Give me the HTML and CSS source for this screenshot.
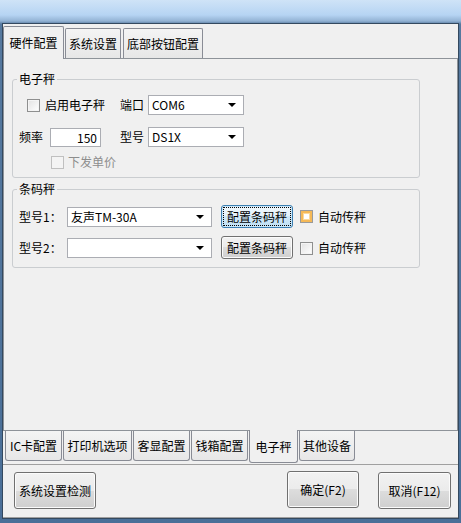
FILE: index.html
```html
<!DOCTYPE html>
<html lang="zh-CN">
<head>
  <meta charset="UTF-8">
  <title>系统设置</title>
  <link rel="stylesheet" href="styles.css">
</head>
<body>
  <div class="window">
    <div class="tabs tabs-top">
      <div class="tab active" style="width:61px">硬件配置</div>
      <div class="tab" style="width:56px">系统设置</div>
      <div class="tab" style="width:80px">底部按钮配置</div>
    </div>

    <div class="page">
      <fieldset class="group">
        <legend>电子秤</legend>
        <div class="row row-1">
          <span class="check ml-14"></span>
          <span class="lbl ml-5">启用电子秤</span>
          <span class="lbl ml-15">端口</span>
          <div class="combo ml-4 w-96"><span>COM6</span><i class="arrow"></i></div>
        </div>
        <div class="row row-2">
          <span class="lbl ml-6">频率</span>
          <div class="input ml-7">150</div>
          <span class="lbl ml-19">型号</span>
          <div class="combo ml-4 w-96"><span>DS1X</span><i class="arrow"></i></div>
        </div>
        <div class="row row-3">
          <span class="check disabled ml-38"></span>
          <span class="lbl gray ml-4">下发单价</span>
        </div>
      </fieldset>

      <fieldset class="group group-2">
        <legend>条码秤</legend>
        <div class="row row-b1">
          <span class="lbl lbl-model ml-6">型号1：</span>
          <div class="combo w-145"><span>友声TM-30A</span><i class="arrow"></i></div>
          <button class="btn btn-focus ml-9">配置条码秤</button>
          <span class="check hot ml-7"></span>
          <span class="lbl ml-5">自动传秤</span>
        </div>
        <div class="row row-b2">
          <span class="lbl lbl-model ml-6">型号2：</span>
          <div class="combo w-145"><span></span><i class="arrow"></i></div>
          <button class="btn ml-9">配置条码秤</button>
          <span class="check ml-7 mt-1"></span>
          <span class="lbl ml-5">自动传秤</span>
        </div>
      </fieldset>
    </div>

    <div class="tabs tabs-bottom">
      <div class="tab" style="width:57px">IC卡配置</div>
      <div class="tab" style="width:69px">打印机选项</div>
      <div class="tab" style="width:57px">客显配置</div>
      <div class="tab" style="width:57px">钱箱配置</div>
      <div class="tab active" style="width:49px">电子秤</div>
      <div class="tab" style="width:56px">其他设备</div>
    </div>

    <div class="footer">
      <button class="btn btn-big btn-check">系统设置检测</button>
      <button class="btn btn-big btn-ok">确定(F2)</button>
      <button class="btn btn-big btn-cancel">取消(F12)</button>
    </div>
  </div>
</body>
</html>
```

FILE: styles.css
```css
* { box-sizing: border-box; }
body {
  margin: 0;
  height: 523px;
  overflow: hidden;
  font-family: "Noto Sans CJK SC", "Liberation Sans", sans-serif;
  font-size: 12px;
  line-height: 14px;
  color: #000;
  background: linear-gradient(180deg, #cfe3f7 0, #b6d4f3 15px, #93b3d4 21px, #56799f 24px, #4a6f98 100%);
}
.window {
  margin: 23px 2px 0 2px;
  width: 457px;
  height: 496px;
  background: #f0f0f0;
  border: 1px solid #34495f;
  display: flex;
  flex-direction: column;
}

/* tabs */
.tabs { display: flex; flex: none; }
.tab {
  flex: none;
  text-align: center;
  white-space: nowrap;
  border: 1px solid #898c95;
  background: linear-gradient(180deg, #f4f4f4, #e7e7e7);
}
.tab.active { background: #f0f0f0; position: relative; z-index: 1; }
.tabs-top { height: 34px; align-items: flex-end; }
.tabs-top .tab {
  height: 30px;
  line-height: 29px;
  border-bottom: none;
  border-radius: 2px 2px 0 0;
  margin-right: 2px;
}
.tabs-top .tab:first-child { margin-right: 1px; }
.tabs-top .tab.active { height: 33px; line-height: 31px; margin-bottom: -1px; }
.tabs-bottom { height: 33px; align-items: flex-start; padding-left: 2px; }
.tabs-bottom .tab {
  height: 30px;
  line-height: 29px;
  border-top: none;
  border-radius: 0 0 3px 3px;
  margin-right: 1px;
}
.tabs-bottom .tab.active { height: 33px; line-height: 33px; margin-top: -1px; }

.page {
  height: 373px;
  flex: none;
  border: 1px solid #8e9399;
  padding: 13px 0 0 8px;
}

/* group boxes */
.group {
  width: 408px;
  margin: 0;
  padding: 0 0 8px 0;
  border: 1px solid #cacdd0;
  border-radius: 3px;
  min-width: 0;
}
.group legend {
  margin-left: 4px;
  padding: 0 2px;
  line-height: 14px;
}
.group-2 { margin-top: 4px; }
.row { display: flex; align-items: center; }
.row-1 { margin-top: 9px; height: 20px; }
.row-2 { margin-top: 12px; height: 20px; }
.row-3 { margin-top: 8px; height: 14px; }
.row-b1 { margin-top: 9px; height: 23px; }
.row-b2 { margin-top: 8px; height: 23px; }

.lbl { flex: none; white-space: nowrap; }
.lbl-model { width: 48px; }
.gray { color: #8d8d8d; }

.check {
  flex: none;
  width: 13px;
  height: 13px;
  border: 1px solid #8e8f8f;
  background: linear-gradient(135deg, #e2e2e2, #ffffff);
  box-shadow: inset 0 0 0 1px #f4f4f4;
}
.check.disabled { border-color: #c0c0c0; background: #f4f4f4; box-shadow: none; }
.check.hot {
  border-color: #9a9a9a;
  background: #fff;
  box-shadow: inset 0 0 0 2px #f5b957, inset 0 0 0 3px #fcd99b;
}

.combo {
  flex: none;
  height: 20px;
  border: 1px solid #abadb3;
  background: #fff;
  display: flex;
  align-items: center;
  padding: 0 0 0 3px;
}
.combo span { flex: 1; white-space: nowrap; }
.arrow {
  width: 0;
  height: 0;
  margin-right: 7px;
  border-left: 4px solid transparent;
  border-right: 4px solid transparent;
  border-top: 4px solid #000;
}
.input {
  flex: none;
  width: 51px;
  height: 19px;
  line-height: 17px;
  border: 1px solid #abadb3;
  background: #fff;
  text-align: right;
  padding-right: 3px;
}

.btn {
  flex: none;
  font: inherit;
  color: #000;
  width: 72px;
  height: 23px;
  padding: 0;
  border: 1px solid #707070;
  border-radius: 3px;
  background: linear-gradient(180deg, #f2f2f2 0, #ebebeb 50%, #dddddd 50%, #cfcfcf 100%);
  box-shadow: inset 0 0 0 1px #fbfbfb;
}
.btn-focus {
  border-color: #3c7fb1;
  background: linear-gradient(180deg, #f1f8fd 0, #e3f1fb 50%, #d0e8f8 50%, #bedff4 100%);
  box-shadow: inset 0 0 0 1px #c8e6fa;
  outline: 1px dotted #000;
  outline-offset: -3px;
}

.footer {
  height: 54px;
  flex: none;
  border-top: 1px solid #a0a0a0;
  border-bottom: 1px solid #a0a0a0;
  display: flex;
  align-items: flex-start;
  padding: 7px 7px 0 11px;
}
.btn-big { height: 37px; }
.btn-check { width: 82px; }
.btn-ok { margin-left: auto; margin-top: -1px; }
.btn-cancel { width: 73px; margin-left: 19px; }

.ml-4 { margin-left: 4px; }
.ml-5 { margin-left: 5px; }
.ml-6 { margin-left: 6px; }
.ml-7 { margin-left: 7px; }
.ml-9 { margin-left: 9px; }
.ml-14 { margin-left: 14px; }
.ml-15 { margin-left: 15px; }
.ml-19 { margin-left: 19px; }
.ml-38 { margin-left: 38px; }
.mt-1 { margin-top: 1px; }
.w-96 { width: 96px; }
.w-145 { width: 145px; }
```
